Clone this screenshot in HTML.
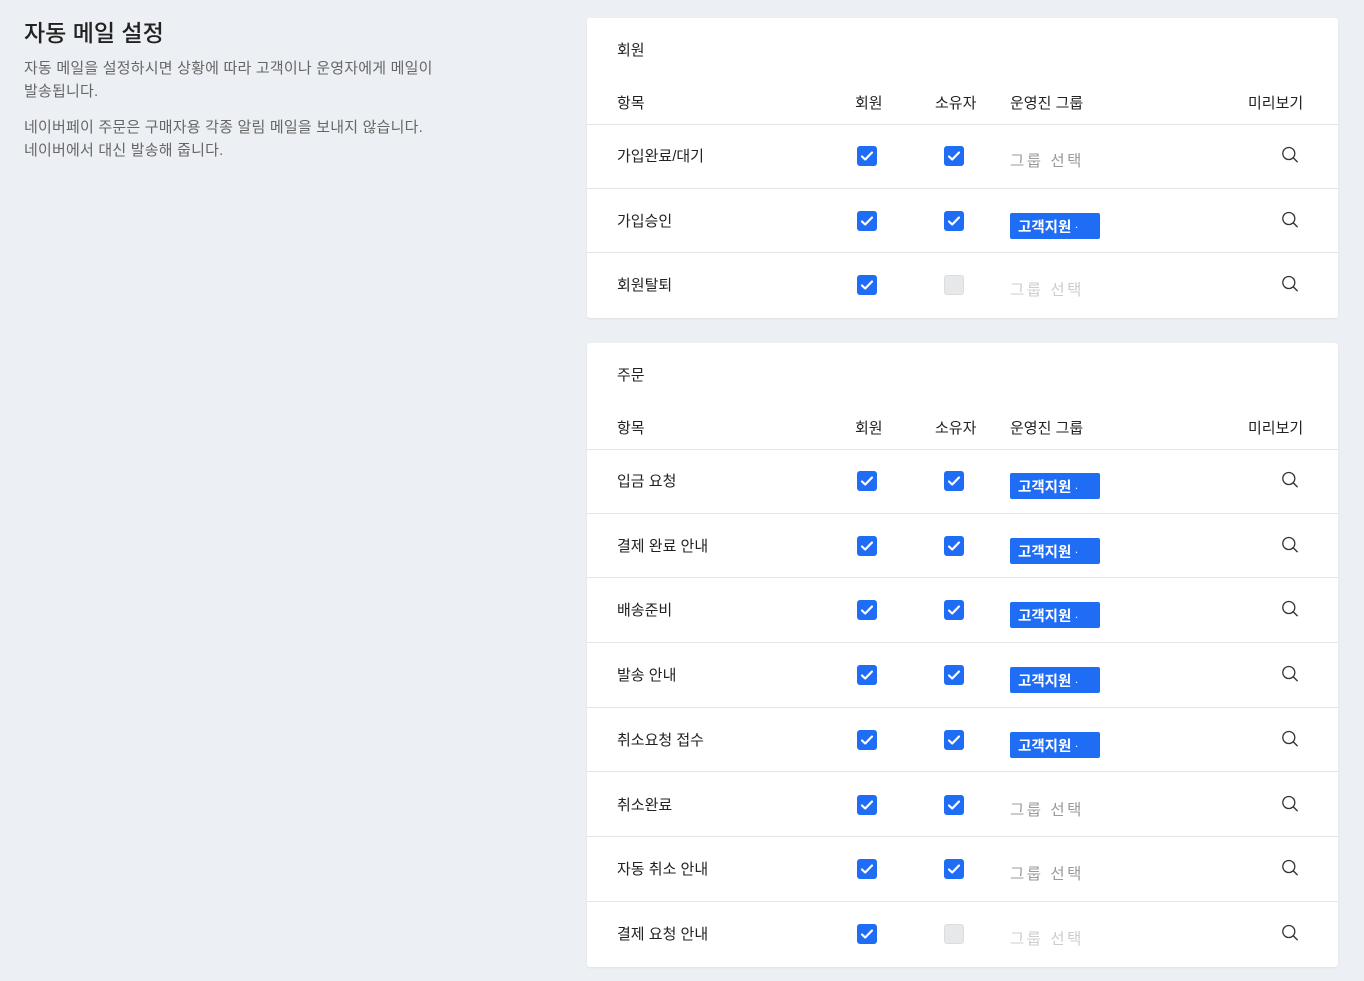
<!DOCTYPE html>
<html><head><meta charset="utf-8"><style>
*{box-sizing:border-box;margin:0;padding:0}
body{width:1364px;height:981px;background:#eceff3;font-family:"Liberation Sans","Noto Sans CJK KR",sans-serif;color:#222;position:relative;overflow:hidden}
h1{position:absolute;left:24px;top:14px;font-size:23px;font-weight:500;color:#222}
.p{position:absolute;left:24px;font-size:15px;color:#666;line-height:23px;letter-spacing:0.2px}
.card{position:absolute;left:587px;width:751px;background:#fff;border-radius:3px;box-shadow:0 1px 2px rgba(0,0,0,.06)}
.t{position:absolute;left:30px;font-size:15px}
.hdr{position:absolute;left:0;right:0;height:33px;font-size:15px;border-bottom:1px solid #e6e6e6}
.hdr span,.row span{position:absolute}
.row{position:absolute;left:0;right:0;height:64.7px;border-bottom:1px solid #e6e6e6;font-size:15px}
.row:last-child{border-bottom:none}
.cb{position:absolute;width:20px;height:20px;border-radius:3px;background:#1f6cf5;top:22px}
.cb svg{position:absolute;left:3px;top:4px}
.cb.off{background:#e7e8ea;border:1px solid #ddd}
.g{position:absolute;left:423px;top:25px;color:#999;font-size:15.5px;letter-spacing:2.5px}
.g.dis{color:#ccc}
.tag{position:absolute;left:423px;top:24px;width:90px;height:26px;background:#1f6cf5;color:#fff;border-radius:2px;font-size:14.5px;font-weight:bold;padding:3px 0 0 8px}
.tag i{font-style:normal;font-size:8px;margin-left:4px;vertical-align:middle}
.s{position:absolute;left:693px;top:21px}
</style></head><body>
<h1>자동 메일 설정</h1>
<div class="p" style="top:57px">자동 메일을 설정하시면 상황에 따라 고객이나 운영자에게 메일이<br>발송됩니다.</div>
<div class="p" style="top:116px">네이버페이 주문은 구매자용 각종 알림 메일을 보내지 않습니다.<br>네이버에서 대신 발송해 줍니다.</div>

<div class="card" style="top:18px;height:300px">
<div class="t" style="top:21px">회원</div>
<div class="hdr" style="top:74px"><span style="left:30px;top:0">항목</span><span style="left:268px">회원</span><span style="left:348px">소유자</span><span style="left:423px">운영진 그룹</span><span style="left:661px">미리보기</span></div>
<div id="c1" style="position:absolute;top:106px;left:0;right:0"></div>
</div>

<div class="card" style="top:343px;height:624px">
<div class="t" style="top:21px">주문</div>
<div class="hdr" style="top:74px"><span style="left:30px;top:0">항목</span><span style="left:268px">회원</span><span style="left:348px">소유자</span><span style="left:423px">운영진 그룹</span><span style="left:661px">미리보기</span></div>
<div id="c2" style="position:absolute;top:106px;left:0;right:0"></div>
</div>

<script>
var chk='<svg width="14" height="12" viewBox="0 0 14 12"><path d="M2 6.5l3.2 3L12 2.5" stroke="#fff" stroke-width="2.2" fill="none" stroke-linecap="round" stroke-linejoin="round"/></svg>';
var srch='<svg width="20" height="20" viewBox="0 0 20 20"><circle cx="8.8" cy="8.5" r="6" stroke="#333" stroke-width="1.3" fill="none"/><path d="M13.2 12.8l4 4" stroke="#333" stroke-width="1.4" stroke-linecap="round"/></svg>';
function row(i,name,o,g){
 var gh = g==1?'<div class="tag">고객지원<i>·</i></div>':'<div class="g'+(g==2?' dis':'')+'">그룹 선택</div>';
 return '<div class="row" style="top:'+(i*64.7)+'px"><span style="left:30px;top:21px">'+name+'</span><div class="cb" style="left:270px">'+chk+'</div><div class="cb'+(o?'':' off')+'" style="left:357px">'+(o?chk:'')+'</div>'+gh+'<div class="s">'+srch+'</div></div>';
}
var a=[['가입완료/대기',1,0],['가입승인',1,1],['회원탈퇴',0,2]];
var b=[['입금 요청',1,1],['결제 완료 안내',1,1],['배송준비',1,1],['발송 안내',1,1],['취소요청 접수',1,1],['취소완료',1,0],['자동 취소 안내',1,0],['결제 요청 안내',0,2]];
document.getElementById('c1').innerHTML=a.map(function(r,i){return row(i,r[0],r[1],r[2])}).join('');
document.getElementById('c2').innerHTML=b.map(function(r,i){return row(i,r[0],r[1],r[2])}).join('');
</script>
</body></html>
